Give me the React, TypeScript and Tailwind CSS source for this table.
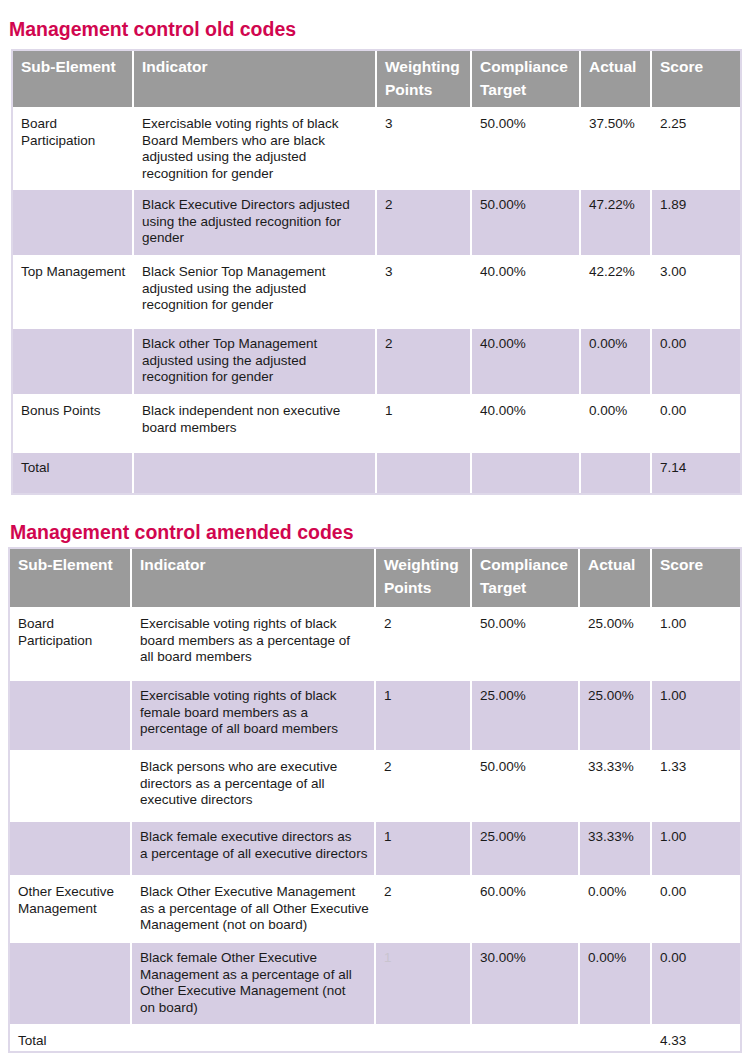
type Row = {
  cells: string[];
  h: number;
  shade?: boolean;
  faint?: number;
};

const headers = ["Sub-Element", "Indicator", "Weighting Points", "Compliance Target", "Actual", "Score"];

const oldRows: Row[] = [
  { h: 81, cells: ["Board Participation", "Exercisable voting rights of black\nBoard Members who are black\nadjusted using the adjusted\nrecognition for gender", "3", "50.00%", "37.50%", "2.25"] },
  { h: 67, shade: true, cells: ["", "Black Executive Directors adjusted\nusing the adjusted recognition for\ngender", "2", "50.00%", "47.22%", "1.89"] },
  { h: 72, cells: ["Top Management", "Black Senior Top Management\nadjusted using the adjusted\nrecognition for gender", "3", "40.00%", "42.22%", "3.00"] },
  { h: 67, shade: true, cells: ["", "Black other Top Management\nadjusted using the adjusted\nrecognition for gender", "2", "40.00%", "0.00%", "0.00"] },
  { h: 57, cells: ["Bonus Points", "Black independent non executive\nboard members", "1", "40.00%", "0.00%", "0.00"] },
  { h: 40, shade: true, cells: ["Total", "", "", "", "", "7.14"] },
];

const newRows: Row[] = [
  { h: 72, cells: ["Board Participation", "Exercisable voting rights of black\nboard members as a percentage of\nall board members", "2", "50.00%", "25.00%", "1.00"] },
  { h: 71, shade: true, cells: ["", "Exercisable voting rights of black\nfemale board members as a\npercentage of all board members", "1", "25.00%", "25.00%", "1.00"] },
  { h: 70, cells: ["", "Black persons who are executive\ndirectors as a percentage of all\nexecutive directors", "2", "50.00%", "33.33%", "1.33"] },
  { h: 55, shade: true, cells: ["", "Black female executive directors as\na percentage of all executive directors", "1", "25.00%", "33.33%", "1.00"] },
  { h: 66, cells: ["Other Executive\nManagement", "Black Other Executive Management\nas a percentage of all Other Executive\nManagement (not on board)", "2", "60.00%", "0.00%", "0.00"] },
  { h: 83, shade: true, faint: 2, cells: ["", "Black female Other Executive\nManagement as a percentage of all\nOther Executive Management (not\non board)", "1", "30.00%", "0.00%", "0.00"] },
  { h: 25, cells: ["Total", "", "", "", "", "4.33"] },
];

function ScoreTable({ rows, cols, headH }: { rows: Row[]; cols: number[]; headH: number }) {
  return (
    <div className="border-2 border-[#ded8e9]">
      <table className="table-fixed border-separate border-spacing-0">
        <colgroup>
          {cols.map((w, i) => (
            <col key={i} style={{ width: w }} />
          ))}
        </colgroup>
        <thead>
          <tr style={{ height: headH }}>
            {headers.map((h, i) => (
              <th
                key={h}
                className={`bg-[#9b9b9b] pl-[8px] pr-1 pt-[5px] text-left align-top text-[15.5px] font-bold leading-[22.5px] text-white border-b-2 border-white ${i < 5 ? "border-r-2" : ""}`}
              >
                {h}
              </th>
            ))}
          </tr>
        </thead>
        <tbody>
          {rows.map((r, ri) => (
            <tr key={ri} style={{ height: r.h }}>
              {r.cells.map((c, ci) => (
                <td
                  key={ci}
                  className={`whitespace-pre-line pl-[8px] pr-[3px] pt-[7px] align-top text-[13.5px] leading-[16.5px] border-white ${r.shade ? "bg-[#d6cde3]" : "bg-white"} ${ci < 5 ? "border-r-2" : ""} ${ri < rows.length - 1 ? "border-b-2" : ""} ${r.faint === ci ? "text-[#c9c4cf]" : "text-[#1a1a1a]"}`}
                >
                  {c}
                </td>
              ))}
            </tr>
          ))}
        </tbody>
      </table>
    </div>
  );
}

export default function App() {
  return (
    <div className="min-h-[1064px] w-[754px] bg-white pt-[17px]" style={{ fontFamily: '"Liberation Sans", Arial, sans-serif' }}>
      <h2 className="ml-[9px] text-[19.5px] font-bold leading-[24px] text-[#d1064f]">Management control old codes</h2>
      <div className="ml-[11px] mt-[8px] w-[731px]">
        <ScoreTable rows={oldRows} cols={[121, 243, 95, 109, 71, 88]} headH={58} />
      </div>
      <h2 className="ml-[10px] mt-[25px] text-[19.5px] font-bold leading-[24px] text-[#d1064f]">Management control amended codes</h2>
      <div className="ml-[8px] mt-[3px] w-[734px]">
        <ScoreTable rows={newRows} cols={[122, 244, 96, 108, 72, 88]} headH={60} />
      </div>
    </div>
  );
}
